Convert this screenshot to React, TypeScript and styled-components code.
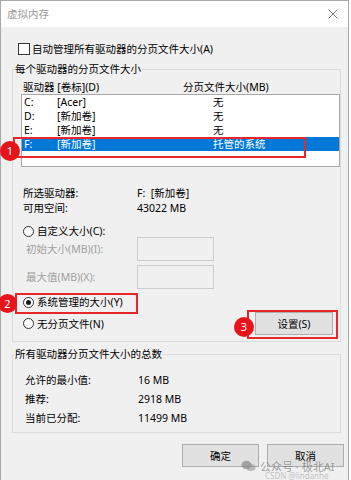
import styled, { createGlobalStyle } from 'styled-components';

const GlobalStyle = createGlobalStyle`
  html, body {
    margin: 0;
    padding: 0;
    background: #ffffff;
  }
  body {
    font-family: "Noto Sans", "Noto Sans CJK SC", sans-serif;
    font-size: 10.5px;
    line-height: 14px;
    color: #000;
  }
`;

const Window = styled.div`
  position: relative;
  width: 349px;
  height: 480px;
  box-sizing: border-box;
  border: 1px solid #a8a8a8;
  border-bottom: none;
  background: #f0f0f0;
`;

const TitleBar = styled.div`
  height: 26px;
  background: #ffffff;
  display: flex;
  align-items: center;
  justify-content: space-between;
  padding: 0 10px 0 6px;
`;

const Title = styled.span`
  color: #9a9a9a;
`;

const Content = styled.div`
  padding: 15px 4px 0 11px;
`;

const CheckRow = styled.label`
  display: flex;
  align-items: center;
  gap: 2px;
  height: 14px;
  padding-left: 6px;
`;

const CheckBox = styled.span`
  width: 12px;
  height: 12px;
  box-sizing: border-box;
  border: 1px solid #333;
  background: #fff;
`;

const GroupBox = styled.div<{ $top: number }>`
  position: relative;
  margin-top: ${({ $top }) => $top}px;
  margin-right: 3px;
  border: 1px solid #dcdcdc;
`;

const Legend = styled.span`
  position: absolute;
  top: -8px;
  left: 1px;
  padding: 0 1px;
  background: #f0f0f0;
`;

const HeaderRow = styled.div`
  margin-top: 10px;
  height: 14px;
  padding-left: 10px;
  display: grid;
  grid-template-columns: 160px 1fr;
`;

const ListBox = styled.div`
  margin-left: 8px;
  height: 73px;
  box-sizing: border-box;
  border: 1px solid #a9a9a9;
  background: #fff;
`;

const ListRow = styled.div<{ $selected?: boolean }>`
  height: 14px;
  padding-left: 2px;
  display: grid;
  grid-template-columns: 33px 156px 1fr;
  background: ${({ $selected }) => ($selected ? '#0078d7' : 'transparent')};
  color: ${({ $selected }) => ($selected ? '#fff' : '#000')};
`;

const InfoList = styled.div<{ $top: number; $pad: number; $label: number; $row: number; $bottom?: number }>`
  margin-top: ${({ $top }) => $top}px;
  padding-left: ${({ $pad }) => $pad}px;
  padding-bottom: ${({ $bottom = 0 }) => $bottom}px;
  display: grid;
  grid-template-columns: ${({ $label }) => $label}px 1fr;
  grid-auto-rows: ${({ $row }) => $row}px;
  align-items: center;
`;

const RadioRow = styled.label<{ $top: number }>`
  margin-top: ${({ $top }) => $top}px;
  height: 12px;
  padding-left: 10px;
  display: flex;
  align-items: center;
  gap: 3px;
`;

const Radio = styled.span<{ $checked?: boolean }>`
  width: 11px;
  height: 11px;
  box-sizing: border-box;
  border-radius: 50%;
  border: 1px solid #333;
  background: #fff;
  display: flex;
  align-items: center;
  justify-content: center;

  &::after {
    content: '';
    width: 5px;
    height: 5px;
    border-radius: 50%;
    background: ${({ $checked }) => ($checked ? '#1a1a1a' : 'transparent')};
  }
`;

const FieldRow = styled.div`
  height: 24px;
  padding-left: 13px;
  display: grid;
  grid-template-columns: 111px 77px;
  align-items: center;
  color: #a0a0a0;

  & + & {
    margin-top: 4px;
  }
`;

const Field = styled.div`
  height: 24px;
  box-sizing: border-box;
  border: 1px solid #cccccc;
  background: #f0f0f0;
`;

const BottomRow = styled.div`
  margin-top: 4px;
  margin-bottom: 6px;
  height: 23px;
  padding: 0 7px 0 10px;
  display: flex;
  align-items: center;
  justify-content: space-between;
`;

const RadioInline = styled.label`
  display: flex;
  align-items: center;
  gap: 3px;
`;

const Button = styled.div<{ $width: number }>`
  width: ${({ $width }) => $width}px;
  height: 23px;
  box-sizing: border-box;
  border: 1px solid #adadad;
  background: #e1e1e1;
  display: flex;
  align-items: center;
  justify-content: center;
`;

const Footer = styled.div`
  margin-top: 11px;
  display: flex;
  justify-content: flex-end;
  gap: 8px;
`;

const RedBox = styled.div`
  position: absolute;
  box-sizing: border-box;
  border: 2px solid #e8262b;
  pointer-events: none;
`;

const Badge = styled.div<{ $size: number }>`
  position: absolute;
  width: ${({ $size }) => $size}px;
  height: ${({ $size }) => $size}px;
  border-radius: 50%;
  background: #e8141c;
  color: #fff;
  font-size: 11px;
  display: flex;
  align-items: center;
  justify-content: center;
`;

const Watermark = styled.div`
  position: absolute;
  left: 240px;
  top: 459px;
  display: flex;
  align-items: center;
  gap: 4px;
  color: rgba(110, 110, 110, 0.65);
  font-size: 11px;
  line-height: 11px;
  pointer-events: none;
`;

const WatermarkSub = styled.span`
  position: absolute;
  left: 24px;
  top: 12px;
  font-size: 8px;
  line-height: 8px;
  color: rgba(150, 150, 150, 0.55);
  white-space: nowrap;
`;

const drives = [
  { letter: 'C:', label: '[Acer]', size: '无' },
  { letter: 'D:', label: '[新加卷]', size: '无' },
  { letter: 'E:', label: '[新加卷]', size: '无' },
  { letter: 'F:', label: '[新加卷]', size: '托管的系统', selected: true },
];

export default function App() {
  return (
    <>
      <GlobalStyle />
      <Window>
        <TitleBar>
          <Title>虚拟内存</Title>
          <svg width="10" height="10" viewBox="0 0 10 10">
            <path d="M0.5 0.5 L9.5 9.5 M9.5 0.5 L0.5 9.5" stroke="#7a7a7a" strokeWidth="1" />
          </svg>
        </TitleBar>
        <Content>
          <CheckRow>
            <CheckBox />
            自动管理所有驱动器的分页文件大小(A)
          </CheckRow>

          <GroupBox $top={13}>
            <Legend>每个驱动器的分页文件大小</Legend>
            <HeaderRow>
              <span>驱动器 [卷标](D)</span>
              <span>分页文件大小(MB)</span>
            </HeaderRow>
            <ListBox>
              {drives.map((d) => (
                <ListRow key={d.letter} $selected={d.selected}>
                  <span>{d.letter}</span>
                  <span>{d.label}</span>
                  <span>{d.size}</span>
                </ListRow>
              ))}
            </ListBox>
            <InfoList $top={18} $pad={10} $label={114} $row={15}>
              <span>所选驱动器:</span>
              <span>F:&nbsp;&nbsp;[新加卷]</span>
              <span>可用空间:</span>
              <span>43022 MB</span>
            </InfoList>
            <RadioRow $top={10}>
              <Radio />
              自定义大小(C):
            </RadioRow>
            <FieldRow>
              <span>初始大小(MB)(I):</span>
              <Field />
            </FieldRow>
            <FieldRow>
              <span>最大值(MB)(X):</span>
              <Field />
            </FieldRow>
            <RadioRow $top={7}>
              <Radio $checked />
              系统管理的大小(Y)
            </RadioRow>
            <BottomRow>
              <RadioInline>
                <Radio />
                无分页文件(N)
              </RadioInline>
              <Button $width={78}>设置(S)</Button>
            </BottomRow>
          </GroupBox>

          <GroupBox $top={12}>
            <Legend>所有驱动器分页文件大小的总数</Legend>
            <InfoList $top={15} $pad={12} $label={113} $row={19} $bottom={5}>
              <span>允许的最小值:</span>
              <span>16 MB</span>
              <span>推荐:</span>
              <span>2918 MB</span>
              <span>当前已分配:</span>
              <span>11499 MB</span>
            </InfoList>
          </GroupBox>

          <Footer>
            <Button $width={77}>确定</Button>
            <Button $width={77}>取消</Button>
          </Footer>
        </Content>

        <RedBox style={{ left: 12, top: 136, width: 293, height: 21 }} />
        <RedBox style={{ left: 14, top: 292, width: 123, height: 21 }} />
        <RedBox style={{ left: 246, top: 309, width: 91, height: 29 }} />
        <Badge $size={20} style={{ left: -1, top: 140 }}>1</Badge>
        <Badge $size={19} style={{ left: -3, top: 293 }}>2</Badge>
        <Badge $size={20} style={{ left: 233, top: 316 }}>3</Badge>

        <Watermark>
          <svg width="15" height="12" viewBox="0 0 15 12">
            <ellipse cx="5.5" cy="5" rx="5" ry="4.2" fill="rgba(120,120,120,0.6)" />
            <ellipse cx="10" cy="7.5" rx="4.5" ry="3.6" fill="rgba(150,150,150,0.6)" />
          </svg>
          <span>公众号 · 极北AI</span>
          <WatermarkSub>CSDN @lindanhe</WatermarkSub>
        </Watermark>
      </Window>
    </>
  );
}
